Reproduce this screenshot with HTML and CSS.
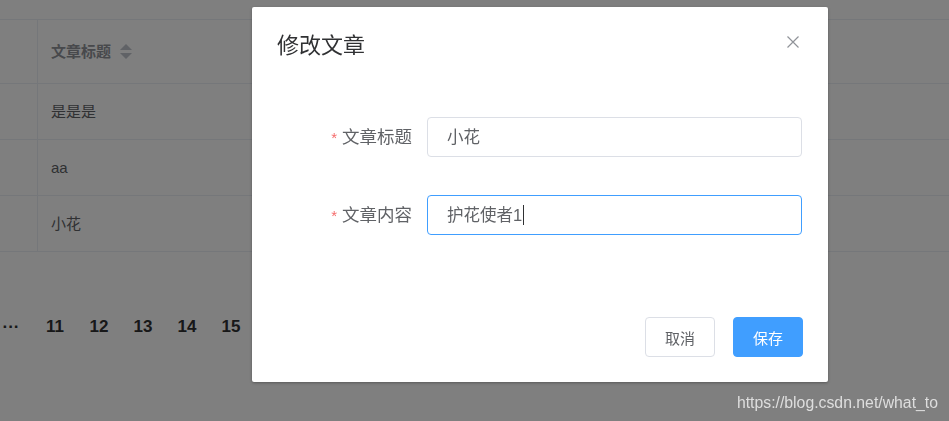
FILE: index.html
```html
<!DOCTYPE html>
<html lang="zh-CN">
<head>
<meta charset="utf-8">
<title>修改文章</title>
<link rel="stylesheet" href="styles.css">
</head>
<body>
<div class="page">
  <div class="table">
    <div class="row head">
      <div class="cell first"></div>
      <div class="cell">文章标题 <span class="sort"><i class="up"></i><i class="down"></i></span></div>
    </div>
    <div class="row">
      <div class="cell first"></div>
      <div class="cell">是是是</div>
    </div>
    <div class="row">
      <div class="cell first"></div>
      <div class="cell">aa</div>
    </div>
    <div class="row">
      <div class="cell first"></div>
      <div class="cell">小花</div>
    </div>
  </div>
  <ul class="pager">
    <li>···</li>
    <li>11</li>
    <li>12</li>
    <li>13</li>
    <li>14</li>
    <li>15</li>
  </ul>
</div>

<div class="mask"></div>

<div class="dialog">
  <div class="dialog-header">
    <span class="dialog-title">修改文章</span>
    <svg class="close" viewBox="0 0 12 12" width="12" height="12"><path d="M0.5 0.5L11.5 11.5M11.5 0.5L0.5 11.5" stroke="#909399" stroke-width="1.2" fill="none"/></svg>
  </div>
  <div class="dialog-body">
    <div class="form-item">
      <label class="label"><span class="req">*</span>文章标题</label>
      <div class="input">小花</div>
    </div>
    <div class="form-item">
      <label class="label"><span class="req">*</span>文章内容</label>
      <div class="input focus">护花使者1<span class="caret"></span></div>
    </div>
  </div>
  <div class="dialog-footer">
    <button class="btn">取消</button>
    <button class="btn primary">保存</button>
  </div>
</div>

<div class="watermark">https://blog.csdn.net/what_to</div>
</body>
</html>
```
FILE: styles.css
```css
html, body {
  margin: 0;
  padding: 0;
  width: 949px;
  height: 421px;
  overflow: hidden;
  background: #fff;
  font-family: "Liberation Sans", "Noto Sans CJK SC", sans-serif;
}

.page {
  padding-top: 19px;
}

.table {
  border-top: 1px solid #ebeef5;
}

.row {
  display: grid;
  grid-template-columns: 38px 1fr;
  height: 55px;
  border-bottom: 1px solid #ebeef5;
  color: #606266;
  font-size: 15px;
}

.row.head {
  height: 63px;
  color: #909399;
  font-weight: bold;
}

.cell {
  display: flex;
  align-items: center;
  padding-left: 13px;
  line-height: 20px;
}

.cell.first {
  padding: 0;
  border-right: 1px solid #ebeef5;
}

.sort {
  display: inline-flex;
  flex-direction: column;
  gap: 3px;
  margin-left: 9px;
}

.sort i {
  display: block;
  width: 0;
  height: 0;
  border-left: 6px solid transparent;
  border-right: 6px solid transparent;
}

.sort .up {
  border-bottom: 6px solid #c0c4cc;
}

.sort .down {
  border-top: 6px solid #c0c4cc;
}

.pager {
  list-style: none;
  display: flex;
  margin: 63px 0 0 -11px;
  padding: 0;
}

.pager li {
  width: 44px;
  text-align: center;
  font-size: 17px;
  font-weight: bold;
  color: #303133;
  line-height: 24px;
}

.mask {
  position: fixed;
  inset: 0;
  background: rgba(0, 0, 0, 0.5);
}

.dialog {
  position: absolute;
  left: 252px;
  top: 7px;
  width: 576px;
  background: #fff;
  border-radius: 2px;
  box-shadow: 0 1px 3px rgba(0, 0, 0, 0.3);
}

.dialog-header {
  position: relative;
  padding: 25px 25px 10px;
}

.dialog-title {
  display: block;
  font-size: 22px;
  line-height: 27px;
  color: #303133;
}

.close {
  position: absolute;
  top: 29px;
  right: 29px;
}

.dialog-body {
  padding: 48px 26px 0 0;
}

.form-item {
  display: flex;
  align-items: center;
  height: 40px;
  margin-bottom: 38px;
}

.label {
  width: 175px;
  height: 40px;
  box-sizing: border-box;
  padding-right: 15px;
  display: flex;
  align-items: center;
  justify-content: flex-end;
  font-size: 17.5px;
  color: #606266;
  line-height: 24px;
}

.req {
  color: #f56c6c;
  margin-right: 5px;
  font-size: 15px;
  line-height: 15px;
}

.input {
  width: 375px;
  height: 40px;
  box-sizing: border-box;
  border: 1px solid #dcdfe6;
  border-radius: 4px;
  padding-left: 19px;
  display: flex;
  align-items: center;
  font-size: 16.5px;
  line-height: 22px;
  color: #606266;
}

.input.focus {
  border-color: #409eff;
}

.caret {
  display: inline-block;
  width: 1px;
  height: 20px;
  background: #303133;
  margin-left: 1px;
}

.dialog-footer {
  display: flex;
  justify-content: flex-end;
  gap: 18px;
  padding: 44px 25px 25px;
}

.btn {
  width: 70px;
  height: 40px;
  border: 1px solid #dcdfe6;
  border-radius: 4px;
  background: #fff;
  color: #606266;
  font-family: "Liberation Sans", "Noto Sans CJK SC", sans-serif;
  font-size: 15px;
  padding: 0;
}

.btn.primary {
  background: #409eff;
  border-color: #409eff;
  color: #fff;
}

.watermark {
  position: absolute;
  right: 11px;
  top: 393px;
  font-size: 15.8px;
  line-height: 20px;
  color: #dedede;
}
```
